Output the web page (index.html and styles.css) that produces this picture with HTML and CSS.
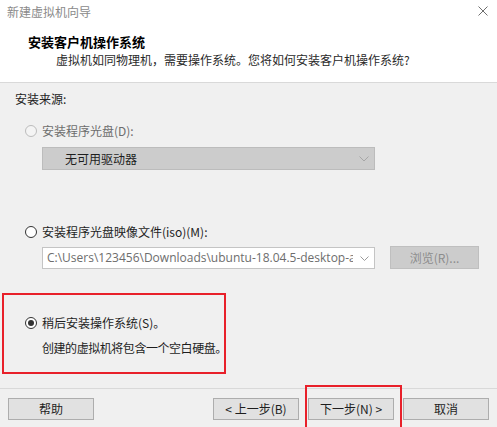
FILE: index.html
```html
<!DOCTYPE html>
<html lang="zh-CN">
<head>
<meta charset="utf-8">
<title>新建虚拟机向导</title>
<link rel="stylesheet" href="styles.css">
</head>
<body>
<div class="window">
  <header class="header">
    <div class="titlebar">
      <span class="title">新建虚拟机向导</span>
      <svg class="close" width="10" height="10" viewBox="0 0 10 10"><path d="M0.5 0.5L9.5 9.5M9.5 0.5L0.5 9.5" stroke="#6e6e6e" stroke-width="1" fill="none"/></svg>
    </div>
    <div class="heading">安装客户机操作系统</div>
    <div class="subtitle">虚拟机如同物理机，需要操作系统。您将如何安装客户机操作系统?</div>
  </header>

  <main class="body">
    <div class="section-label">安装来源:</div>

    <div class="radio-row disabled">
      <span class="radio"></span>
      <span class="label">安装程序光盘(D):</span>
    </div>
    <div class="select disabled-select">
      <span class="select-text">无可用驱动器</span>
      <svg class="chev" width="10" height="6" viewBox="0 0 10 6"><path d="M0.5 0.5L5 5L9.5 0.5" stroke="#a6a6a6" stroke-width="1" fill="none"/></svg>
    </div>

    <div class="radio-row radio-row-2">
      <span class="radio"></span>
      <span class="label">安装程序光盘映像文件(iso)(M):</span>
    </div>
    <div class="combo-row">
      <div class="combo">
        <span class="combo-text">C:\Users\123456\Downloads\ubuntu-18.04.5-desktop-amd64.iso</span>
        <svg class="chev small" width="9" height="5" viewBox="0 0 9 5"><path d="M0.5 0.5L4.5 4.5L8.5 0.5" stroke="#9a9a9a" stroke-width="1" fill="none"/></svg>
      </div>
      <button class="btn btn-disabled browse" type="button">浏览(R)...</button>
    </div>

    <div class="highlight">
      <div class="radio-row checked">
        <span class="radio"><span class="dot"></span></span>
        <span class="label">稍后安装操作系统(S)。</span>
      </div>
      <div class="desc">创建的虚拟机将包含一个空白硬盘。</div>
    </div>
  </main>

  <footer class="footer">
    <button class="btn" type="button">帮助</button>
    <div class="spacer"></div>
    <button class="btn" type="button">&lt; 上一步(B)</button>
    <div class="next-mark">
      <button class="btn" type="button">下一步(N) &gt;</button>
    </div>
    <button class="btn" type="button">取消</button>
  </footer>
</div>
</body>
</html>
```

FILE: styles.css
```css
* { box-sizing: border-box; }
html, body { margin: 0; padding: 0; }
body {
  width: 497px;
  height: 427px;
  overflow: hidden;
  background: #f0f0f0;
  font-family: "Noto Sans CJK SC", "Microsoft YaHei", "Noto Sans", sans-serif;
  font-size: 12px;
  line-height: 16px;
  color: #1e1e1e;
}
.window { width: 497px; height: 427px; display: flex; flex-direction: column; }

.header {
  background: #ffffff;
  height: 83px;
  border-bottom: 1px solid #d9d9d9;
  flex: none;
}
.titlebar {
  display: flex;
  align-items: center;
  justify-content: space-between;
  padding: 4px 9px 0 7px;
  height: 20px;
}
.title { font-size: 12px; color: #8a8a8a; line-height: 16px; }
.close { margin-top: -2px; }
.heading {
  margin-top: 14px;
  padding-left: 28px;
  font-weight: bold;
  font-size: 13px;
  color: #000;
  line-height: 16px;
}
.subtitle {
  margin-top: 2px;
  padding-left: 56px;
  color: #2a2a2a;
}

.body { flex: none; padding-top: 8px; }
.section-label { padding-left: 15px; color: #222; }

.radio-row {
  display: flex;
  align-items: center;
  height: 16px;
  margin-top: 16px;
  padding-left: 25px;
  gap: 5px;
  white-space: nowrap;
}
.radio {
  width: 12px;
  height: 12px;
  border-radius: 50%;
  border: 1px solid #333;
  background: #fff;
  flex: none;
  display: flex;
  align-items: center;
  justify-content: center;
}
.radio-row .label { color: #1e1e1e; }
.radio-row.disabled .radio { border-color: #bcbcbc; background: #f4f4f4; }
.radio-row.disabled .label { color: #6d6d6d; }
.dot { width: 6px; height: 6px; border-radius: 50%; background: #333; }

.select {
  margin: 8px 0 0 42px;
  width: 333px;
  height: 23px;
  display: flex;
  align-items: center;
  justify-content: space-between;
  padding: 0 5px 0 22px;
}
.disabled-select { background: #cccccc; border: 1px solid #bcbcbc; }
.select-text { color: #1e1e1e; }

.radio-row-2 { margin-top: 54px; }

.combo-row {
  display: flex;
  align-items: flex-start;
  margin: 6px 0 0 42px;
  gap: 15px;
  height: 23px;
}
.combo {
  margin-top: 1px;
  width: 333px;
  height: 22px;
  background: #fff;
  border: 1px solid #c4c4c4;
  display: flex;
  align-items: center;
  padding: 0 5px 0 4px;
  gap: 7px;
}
.combo-text {
  flex: 1;
  min-width: 0;
  overflow: hidden;
  white-space: nowrap;
  color: #6d6d6d;
  font-family: "Open Sans", "Noto Sans CJK SC", sans-serif;
  font-size: 12px;
}
.chev { flex: none; }

.btn {
  width: 86px;
  height: 22px;
  padding: 0;
  margin: 0;
  background: #e1e1e1;
  border: 1px solid #adadad;
  font-family: inherit;
  font-size: 12px;
  line-height: 16px;
  color: #1e1e1e;
  flex: none;
}
.btn-disabled { background: #cccccc; border-color: #bfbfbf; color: #8c8c8c; }
.browse { width: 89px; height: 23px; }

.highlight {
  margin: 24px 0 0 2px;
  width: 224px;
  border: 2px solid #e8202a;
  padding: 20px 0 16px 0;
}
.highlight .radio-row { margin-top: 0; padding-left: 21px; }
.desc {
  margin-top: 9px;
  padding-left: 38px;
  color: #1e1e1e;
  white-space: nowrap;
  letter-spacing: -0.45px;
}

.footer {
  margin-top: 14px;
  border-top: 1px solid #d9d9d9;
  display: flex;
  align-items: flex-start;
  padding: 9px 8px 0 8px;
  flex: none;
}
.spacer { flex: 1; }
.next-mark {
  margin: -13px 1px -13px 6px;
  border: 2px solid #e8202a;
  padding: 11px 6px 11px 1px;
}
```
